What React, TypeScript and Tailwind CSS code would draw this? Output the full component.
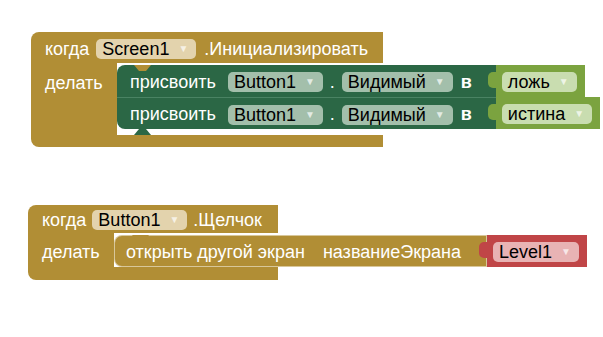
import React from "react"

const font = { fontFamily: '"Liberation Sans", Arial, sans-serif' }

function Field({ label, bg }: { label: string; bg: string }) {
  return (
    <div className={`flex h-[20px] items-center rounded-[5px] pl-[6px] pr-[8px] text-black ${bg}`}>
      <span className="leading-none">{label}</span>
      <span className="ml-[9px] text-[10px] leading-none text-white/70">▼</span>
    </div>
  )
}

// little notch on the top edge of a statement block, filled with the parent's colour
function Notch({ fill, className }: { fill: string; className: string }) {
  return (
    <svg className={`absolute ${className}`} width="17" height="6" viewBox="0 0 17 6">
      <path d="M0 0 L5 6 L12 6 L17 0 Z" fill={fill} />
    </svg>
  )
}

function ValueBlock({ label, bg, fieldBg, tab }: { label: string; bg: string; fieldBg: string; tab: string }) {
  return (
    <div className={`relative flex h-full items-center pl-[6px] pr-[8px] pt-[2px] ${bg}`}>
      <div className={`absolute left-[-8px] top-[7px] h-[16px] w-[9px] rounded-l-[5px] ${tab}`} />
      <Field label={label} bg={fieldBg} />
    </div>
  )
}

function SetRow({ value, first, last }: { value: string; first?: boolean; last?: boolean }) {
  return (
    <div className="relative flex h-[32px] w-max items-stretch">
      <div
        className={`relative flex items-center bg-[#2b6745] pl-[13px] pr-[24px] pt-[2px] text-white ${first ? "rounded-tl-[8px]" : "border-t border-[#4a8363]"} ${last ? "rounded-bl-[8px]" : ""}`}
      >
        {first && <Notch fill="#b18e35" className="left-[17px] top-0" />}
        {last && <Notch fill="#2b6745" className="left-[17px] bottom-[-6px] rotate-180" />}
        <span>присвоить</span>
        <div className="ml-[12px]">
          <Field label="Button1" bg="bg-[#a3bfab]" />
        </div>
        <span className="mx-[7px]">.</span>
        <Field label="Видимый" bg="bg-[#a3bfab]" />
        <span className="ml-[8px] font-bold">в</span>
      </div>
      <ValueBlock label={value} bg="bg-[#7ba33f]" fieldBg="bg-[#c9ddb0]" tab="bg-[#7ba33f]" />
    </div>
  )
}

export default function App() {
  return (
    <div className="relative h-[337px] w-[603px] overflow-hidden bg-white text-[18px]" style={font}>
      {/* Screen1.Initialize */}
      <div className="absolute left-[31px] top-[32px] flex flex-col">
        <div className="flex h-[31px] w-[352px] items-center rounded-tl-[8px] bg-[#b18e35] pl-[14px] pt-[3px] text-white">
          <span>когда</span>
          <div className="ml-[7px]">
            <Field label="Screen1" bg="bg-[#e3d3ad]" />
          </div>
          <span className="ml-[8px]">.Инициализировать</span>
        </div>
        <div className="flex">
          <div className="w-[86px] bg-[#b18e35] pl-[14px] pt-[7px] text-white">делать</div>
          <div className="flex flex-col pb-[6px] pt-[2px]">
            <SetRow value="ложь" first />
            <SetRow value="истина" last />
          </div>
        </div>
        <div className="h-[12px] w-[352px] rounded-bl-[8px] bg-[#b18e35]" />
      </div>

      {/* Button1.Click */}
      <div className="absolute left-[28px] top-[205px] flex flex-col">
        <div className="flex h-[28px] w-[250px] items-center rounded-tl-[8px] bg-[#b18e35] pl-[14px] pt-[2px] text-white">
          <span>когда</span>
          <div className="ml-[6px]">
            <Field label="Button1" bg="bg-[#e3d3ad]" />
          </div>
          <span className="ml-[6px]">.Щелчок</span>
        </div>
        <div className="flex">
          <div className="w-[86px] bg-[#b18e35] pl-[14px] pt-[6px] text-white">делать</div>
          <div className="flex pt-[2px]">
            <div className="relative flex h-[32px] w-max items-stretch">
              <div className="relative flex items-center rounded-l-[8px] border border-white/50 bg-[#b18e35] pl-[11px] pr-[25px] pt-[2px] text-white">
                <Notch fill="#b18e35" className="left-[17px] top-[-1px]" />
                <span>открыть другой экран</span>
                <span className="ml-[18px]">названиеЭкрана</span>
              </div>
              <ValueBlock label="Level1" bg="bg-[#c04547]" fieldBg="bg-[#e8b3b4]" tab="bg-[#c04547]" />
            </div>
          </div>
        </div>
        <div className="h-[13px] w-[250px] rounded-bl-[8px] bg-[#b18e35]" />
      </div>
    </div>
  )
}
